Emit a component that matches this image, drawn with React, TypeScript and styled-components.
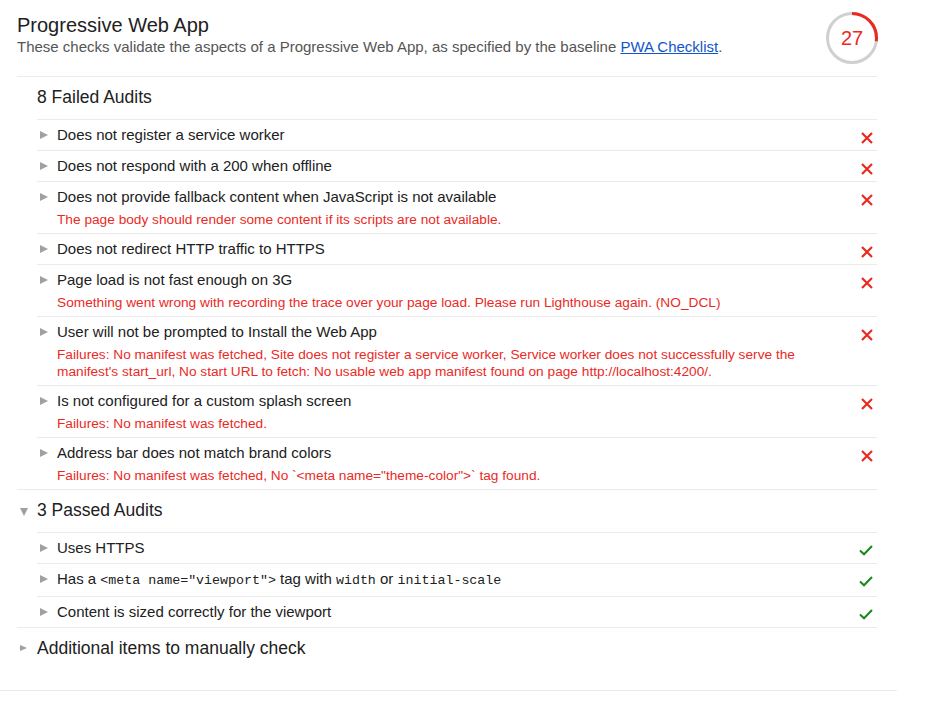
import React from "react";
import styled, { createGlobalStyle } from "styled-components";

const GlobalStyle = createGlobalStyle`
  html, body { margin: 0; padding: 0; background: #fff; }
  body {
    font-family: "Liberation Sans", Arial, sans-serif;
    color: #212121;
    -webkit-font-smoothing: antialiased;
  }
`;

const FAIL = "#eb2a1f";
const PASS = "#178a17";
const LINE = "#ebebeb";

const Page = styled.div`
  width: 897px;
  box-sizing: border-box;
  padding: 13px 20px 20px 17px;
  border-bottom: 1px solid ${LINE};
`;

const Header = styled.header`
  display: flex;
  align-items: flex-start;
  justify-content: space-between;
  padding-bottom: 19px;
  border-bottom: 1px solid ${LINE};
`;

const TitleBlock = styled.div`
  display: flex;
  flex-direction: column;
`;

const Title = styled.h1`
  margin: 0;
  font-size: 20px;
  line-height: 24px;
  font-weight: normal;
  color: #212121;
`;

const Description = styled.p`
  margin: 0;
  font-size: 15px;
  line-height: 20px;
  color: #555;
`;

const Link = styled.a`
  color: #1155cc;
  text-decoration: underline;
`;

const GaugeWrap = styled.div`
  position: relative;
  width: 52px;
  height: 52px;
  margin: -1px -1px -8px 0;
  flex-shrink: 0;
`;

const GaugeValue = styled.span`
  position: absolute;
  inset: 0;
  display: flex;
  align-items: center;
  justify-content: center;
  font-size: 20px;
  color: ${FAIL};
`;

const Group = styled.section<{ $bordered?: boolean }>`
  border-top: ${(p) => (p.$bordered ? `1px solid ${LINE}` : "none")};
`;

const GroupHeader = styled.div`
  display: flex;
  align-items: center;
  height: 24px;
  padding: 8px 0 10px;
`;

const GroupArrowCell = styled.div`
  width: 20px;
  display: flex;
  align-items: center;
  padding-left: 3px;
  box-sizing: border-box;
`;

const GroupTitle = styled.h2`
  margin: 0;
  font-size: 17.5px;
  line-height: 24px;
  font-weight: normal;
  color: #212121;
`;

const RowList = styled.div`
  margin-left: 20px;
`;

const Row = styled.div`
  display: grid;
  grid-template-columns: 20px 1fr 20px;
  align-items: start;
  padding: 5px 0;
  border-top: 1px solid ${LINE};
`;

const ArrowCell = styled.div`
  height: 20px;
  display: flex;
  align-items: center;
  padding-left: 3px;
`;

const RightArrow = styled.span<{ $size?: number }>`
  display: block;
  width: 0;
  height: 0;
  border-left: ${(p) => p.$size ?? 8}px solid #a0a0a0;
  border-top: ${(p) => (p.$size ?? 8) * 0.55}px solid transparent;
  border-bottom: ${(p) => (p.$size ?? 8) * 0.55}px solid transparent;
`;

const DownArrow = styled.span`
  display: block;
  width: 0;
  height: 0;
  margin-top: 3px;
  border-top: 8px solid #a0a0a0;
  border-left: 4.5px solid transparent;
  border-right: 4.5px solid transparent;
`;

const RowBody = styled.div`
  display: flex;
  flex-direction: column;
`;

const RowTitle = styled.div`
  font-size: 15px;
  line-height: 20px;
  color: #212121;
`;

const RowDetail = styled.div`
  margin-top: 4px;
  font-size: 13.7px;
  line-height: 17px;
  color: ${FAIL};
`;

const Code = styled.code`
  font-family: "Liberation Mono", "DejaVu Sans Mono", monospace;
  font-size: 13.3px;
`;

const IconCell = styled.div`
  display: flex;
  justify-content: flex-end;
  padding-right: 4px;
  padding-top: 7px;
`;

const Gauge = ({ value }: { value: number }) => {
  const r = 24.5;
  const c = 2 * Math.PI * r;
  return (
    <GaugeWrap>
      <svg width="52" height="52" viewBox="0 0 52 52">
        <circle cx="26" cy="26" r={r} fill="none" stroke="#d0d0d0" strokeWidth="3" />
        <circle
          cx="26"
          cy="26"
          r={r}
          fill="none"
          stroke={FAIL}
          strokeWidth="3"
          strokeDasharray={`${(c * value) / 100} ${c}`}
          transform="rotate(-90 26 26)"
        />
      </svg>
      <GaugeValue>{value}</GaugeValue>
    </GaugeWrap>
  );
};

const CrossIcon = () => (
  <svg width="12" height="12" viewBox="0 0 12 12">
    <path d="M1 1 L11 11 M11 1 L1 11" stroke={FAIL} strokeWidth="2.2" />
  </svg>
);

const CheckIcon = () => (
  <svg width="14" height="11" viewBox="0 0 14 11">
    <path d="M1 5.5 L5 9.3 L13 1" stroke={PASS} strokeWidth="2" fill="none" />
  </svg>
);

type Audit = { title: React.ReactNode; detail?: string; pass?: boolean };

const failed: Audit[] = [
  { title: "Does not register a service worker" },
  { title: "Does not respond with a 200 when offline" },
  {
    title: "Does not provide fallback content when JavaScript is not available",
    detail: "The page body should render some content if its scripts are not available.",
  },
  { title: "Does not redirect HTTP traffic to HTTPS" },
  {
    title: "Page load is not fast enough on 3G",
    detail:
      "Something went wrong with recording the trace over your page load. Please run Lighthouse again. (NO_DCL)",
  },
  {
    title: "User will not be prompted to Install the Web App",
    detail:
      "Failures: No manifest was fetched, Site does not register a service worker, Service worker does not successfully serve the manifest's start_url, No start URL to fetch: No usable web app manifest found on page http://localhost:4200/.",
  },
  {
    title: "Is not configured for a custom splash screen",
    detail: "Failures: No manifest was fetched.",
  },
  {
    title: "Address bar does not match brand colors",
    detail: 'Failures: No manifest was fetched, No `<meta name="theme-color">` tag found.',
  },
];

const passed: Audit[] = [
  { title: "Uses HTTPS", pass: true },
  {
    title: (
      <>
        Has a <Code>{'<meta name="viewport">'}</Code> tag with <Code>width</Code> or{" "}
        <Code>initial-scale</Code>
      </>
    ),
    pass: true,
  },
  { title: "Content is sized correctly for the viewport", pass: true },
];

const AuditRow = ({ audit }: { audit: Audit }) => (
  <Row>
    <ArrowCell>
      <RightArrow />
    </ArrowCell>
    <RowBody>
      <RowTitle>{audit.title}</RowTitle>
      {audit.detail && <RowDetail>{audit.detail}</RowDetail>}
    </RowBody>
    <IconCell>{audit.pass ? <CheckIcon /> : <CrossIcon />}</IconCell>
  </Row>
);

export default function App() {
  return (
    <>
      <GlobalStyle />
      <Page>
        <Header>
          <TitleBlock>
            <Title>Progressive Web App</Title>
            <Description>
              These checks validate the aspects of a Progressive Web App, as specified by the
              baseline <Link href="#">PWA Checklist</Link>.
            </Description>
          </TitleBlock>
          <Gauge value={27} />
        </Header>

        <Group>
          <GroupHeader>
            <GroupArrowCell />
            <GroupTitle>8 Failed Audits</GroupTitle>
          </GroupHeader>
          <RowList>
            {failed.map((a, i) => (
              <AuditRow key={i} audit={a} />
            ))}
          </RowList>
        </Group>

        <Group $bordered>
          <GroupHeader>
            <GroupArrowCell>
              <DownArrow />
            </GroupArrowCell>
            <GroupTitle>3 Passed Audits</GroupTitle>
          </GroupHeader>
          <RowList>
            {passed.map((a, i) => (
              <AuditRow key={i} audit={a} />
            ))}
          </RowList>
        </Group>

        <Group $bordered>
          <GroupHeader>
            <GroupArrowCell>
              <RightArrow $size={7} />
            </GroupArrowCell>
            <GroupTitle>Additional items to manually check</GroupTitle>
          </GroupHeader>
        </Group>
      </Page>
    </>
  );
}
